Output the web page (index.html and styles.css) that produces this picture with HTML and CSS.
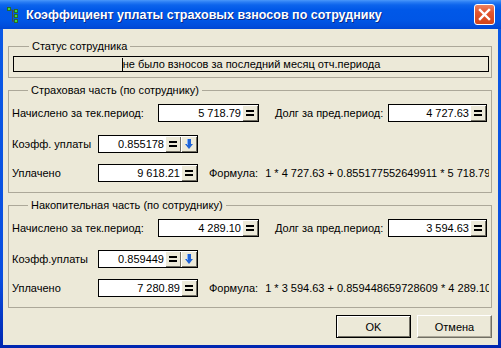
FILE: index.html
```html
<!DOCTYPE html>
<html>
<head>
<meta charset="utf-8">
<link rel="stylesheet" href="styles.css">
</head>
<body>
<div class="window">
  <div class="titlebar">
    <svg class="title-icon" width="12" height="16" viewBox="0 0 12 16">
      <path d="M5.5 3 V14.5 M2 3 H5.5 M5.5 4 H7 M5.5 9 H7 M5.5 14 H7" stroke="#4a4a4a" stroke-width="1" fill="none"/>
      <rect x="0.5" y="0.5" width="3" height="3" fill="#3ddc3d" stroke="#2a6a2a" stroke-width="1"/>
      <rect x="7.5" y="2.5" width="3" height="3" fill="#3ddc3d" stroke="#2a6a2a" stroke-width="1"/>
      <rect x="7.5" y="7.5" width="3" height="3" fill="#3ddc3d" stroke="#2a6a2a" stroke-width="1"/>
      <rect x="7.5" y="12.5" width="3" height="3" fill="#3ddc3d" stroke="#2a6a2a" stroke-width="1"/>
    </svg>
    <span class="title">Коэффициент уплаты страховых взносов по сотруднику</span>
    <div class="close">
      <svg width="21" height="21" viewBox="0 0 21 21">
        <path d="M6 6 L15 15 M15 6 L6 15" stroke="#fff" stroke-width="2.4" stroke-linecap="square"/>
      </svg>
    </div>
  </div>
  <div class="client">
    <fieldset class="group group-status">
      <legend>Статус сотрудника</legend>
      <div class="status"><span class="caret"></span>не было взносов за последний месяц отч.периода</div>
    </fieldset>

    <fieldset class="group group-calc">
      <legend>Страховая часть (по сотруднику)</legend>
      <div class="row row-first">
        <span class="lbl lbl-wide">Начислено за тек.период:</span>
        <div class="field field-a"><span class="val">5 718.79</span><span class="sbtn"><svg class="eq" width="8" height="6" viewBox="0 0 8 6"><rect x="0" y="0" width="8" height="2"/><rect x="0" y="4" width="8" height="2"/></svg></span></div>
        <span class="lbl lbl-debt">Долг за пред.период:</span>
        <div class="field field-b"><span class="val">4 727.63</span><span class="sbtn"><svg class="eq" width="8" height="6" viewBox="0 0 8 6"><rect x="0" y="0" width="8" height="2"/><rect x="0" y="4" width="8" height="2"/></svg></span></div>
      </div>
      <div class="row row-second">
        <span class="lbl lbl-narrow">Коэфф. уплаты</span>
        <div class="field field-c"><span class="val">0.855178</span><span class="sbtn"><svg class="eq" width="8" height="6" viewBox="0 0 8 6"><rect x="0" y="0" width="8" height="2"/><rect x="0" y="4" width="8" height="2"/></svg></span><span class="sbtn"><svg width="8" height="11" viewBox="0 0 8 11"><rect x="2" y="0" width="4" height="5" fill="#1f63d6"/><path d="M0 5 H8 L4 10 Z" fill="#1f63d6"/><rect x="2" y="0" width="1" height="6" fill="#7fb2ff"/></svg></span></div>
      </div>
      <div class="row row-third">
        <span class="lbl lbl-narrow">Уплачено</span>
        <div class="field field-c"><span class="val">9 618.21</span><span class="sbtn"><svg class="eq" width="8" height="6" viewBox="0 0 8 6"><rect x="0" y="0" width="8" height="2"/><rect x="0" y="4" width="8" height="2"/></svg></span></div>
        <span class="lbl lbl-formula">Формула:</span>
        <span class="formula">1 * 4 727.63 + 0.855177552649911 * 5 718.79</span>
      </div>
    </fieldset>

    <fieldset class="group group-calc">
      <legend>Накопительная часть (по сотруднику)</legend>
      <div class="row row-first">
        <span class="lbl lbl-wide">Начислено за тек.период:</span>
        <div class="field field-a"><span class="val">4 289.10</span><span class="sbtn"><svg class="eq" width="8" height="6" viewBox="0 0 8 6"><rect x="0" y="0" width="8" height="2"/><rect x="0" y="4" width="8" height="2"/></svg></span></div>
        <span class="lbl lbl-debt">Долг за пред.период:</span>
        <div class="field field-b"><span class="val">3 594.63</span><span class="sbtn"><svg class="eq" width="8" height="6" viewBox="0 0 8 6"><rect x="0" y="0" width="8" height="2"/><rect x="0" y="4" width="8" height="2"/></svg></span></div>
      </div>
      <div class="row row-second">
        <span class="lbl lbl-narrow">Коэфф.уплаты</span>
        <div class="field field-c"><span class="val">0.859449</span><span class="sbtn"><svg class="eq" width="8" height="6" viewBox="0 0 8 6"><rect x="0" y="0" width="8" height="2"/><rect x="0" y="4" width="8" height="2"/></svg></span><span class="sbtn"><svg width="8" height="11" viewBox="0 0 8 11"><rect x="2" y="0" width="4" height="5" fill="#1f63d6"/><path d="M0 5 H8 L4 10 Z" fill="#1f63d6"/><rect x="2" y="0" width="1" height="6" fill="#7fb2ff"/></svg></span></div>
      </div>
      <div class="row row-third">
        <span class="lbl lbl-narrow">Уплачено</span>
        <div class="field field-c"><span class="val">7 280.89</span><span class="sbtn"><svg class="eq" width="8" height="6" viewBox="0 0 8 6"><rect x="0" y="0" width="8" height="2"/><rect x="0" y="4" width="8" height="2"/></svg></span></div>
        <span class="lbl lbl-formula">Формула:</span>
        <span class="formula">1 * 3 594.63 + 0.859448659728609 * 4 289.10</span>
      </div>
    </fieldset>

    <div class="buttons">
      <button class="btn btn-default">OK</button>
      <button class="btn">Отмена</button>
    </div>
  </div>
</div>
</body>
</html>
```

FILE: styles.css
```css
html, body {
  margin: 0;
  padding: 0;
  background: #ffffff;
}
body {
  font-family: "Liberation Sans", Arial, sans-serif;
  font-size: 11px;
  color: #000;
}
.window {
  width: 501px;
  height: 348px;
  box-sizing: border-box;
  display: flex;
  flex-direction: column;
  padding: 0 3px 3px 3px;
  background: linear-gradient(to bottom, #0a5ae6 0%, #0a4ee0 80%, #0026b0 100%);
}
.titlebar {
  height: 29px;
  margin: 0 -3px;
  display: flex;
  align-items: center;
  background: linear-gradient(to bottom, #4a98fa 0px, #2a7ef4 2px, #0c64ec 5px, #0058e8 10px, #0056e6 20px, #004ddc 26px, #0046d2 29px);
}
.title-icon {
  margin-left: 7px;
  flex: none;
}
.title {
  margin-left: 7px;
  color: #fff;
  font-weight: bold;
  font-size: 12.5px;
  white-space: nowrap;
  text-shadow: 1px 1px 0 #0a2a8a;
}
.close {
  margin-left: auto;
  margin-right: 6px;
  width: 21px;
  height: 21px;
  box-sizing: border-box;
  border: 1px solid #fff;
  border-radius: 3px;
  background: linear-gradient(to bottom, #ec8262 0%, #e2562f 40%, #d24419 100%);
  display: flex;
  align-items: center;
  justify-content: center;
}
.close svg {
  display: block;
  margin: -1px;
}
.client {
  flex: 1;
  background: #ece9d8;
  display: flex;
  flex-direction: column;
}
.group {
  margin: 0 6px 0 5px;
  padding: 3px 2px 5px 3px;
  border: 1px solid #aca899;
  min-width: 0;
}
.group legend {
  margin-left: 16px;
  padding: 0 3px;
  line-height: 13px;
  font-size: 11px;
}
.group-status {
  margin-top: 11px;
  padding-left: 4px;
}
.group-calc {
  margin-top: 6px;
  padding-top: 7px;
  padding-bottom: 10px;
}
.status {
  height: 16px;
  box-sizing: border-box;
  border: 1px solid #000;
  display: flex;
  align-items: center;
  justify-content: center;
  line-height: 14px;
  white-space: nowrap;
}
.caret {
  width: 1px;
  height: 13px;
  background: #000;
}
.row {
  display: flex;
  align-items: center;
  height: 18px;
}
.row-second {
  margin-top: 13px;
}
.row-third {
  margin-top: 11px;
}
.lbl {
  flex: none;
  white-space: nowrap;
  box-sizing: border-box;
}
.lbl-wide {
  width: 146px;
}
.lbl-narrow {
  width: 86px;
}
.lbl-debt {
  width: 129px;
  padding-left: 16px;
}
.lbl-formula {
  margin-left: 11px;
}
.field {
  flex: none;
  height: 18px;
  box-sizing: border-box;
  border: 1px solid #000;
  background: #fff;
  display: flex;
}
.field-a {
  width: 101px;
}
.field-b {
  width: 99px;
}
.field-c {
  width: 100px;
}
.val {
  flex: 1;
  text-align: right;
  line-height: 16px;
  padding-right: 1px;
  white-space: nowrap;
}
.sbtn {
  flex: none;
  width: 16px;
  height: 16px;
  box-sizing: border-box;
  background: #ece9d8;
  box-shadow: inset 1px 1px 0 #ffffff, inset -1px -1px 0 #716f64;
  display: flex;
  align-items: center;
  justify-content: center;
}
.sbtn svg {
  display: block;
}
.eq {
  fill: #000;
}
.formula {
  margin-left: 7px;
  flex: 1;
  min-width: 0;
  overflow: hidden;
  white-space: nowrap;
}
.buttons {
  display: flex;
  justify-content: flex-end;
  gap: 6px;
  margin: 7px 6px 0 0;
}
.btn {
  width: 75px;
  height: 23px;
  box-sizing: border-box;
  font-family: "Liberation Sans", Arial, sans-serif;
  font-size: 11px;
  color: #000;
  background: #ece9d8;
  border: 1px solid;
  border-color: #fff #716f64 #716f64 #fff;
  box-shadow: inset -1px -1px 0 #aca899;
  padding: 0;
}
.btn-default {
  border: 1px solid #000;
  box-shadow: inset 1px 1px 0 #fff, inset -1px -1px 0 #716f64;
}
```
